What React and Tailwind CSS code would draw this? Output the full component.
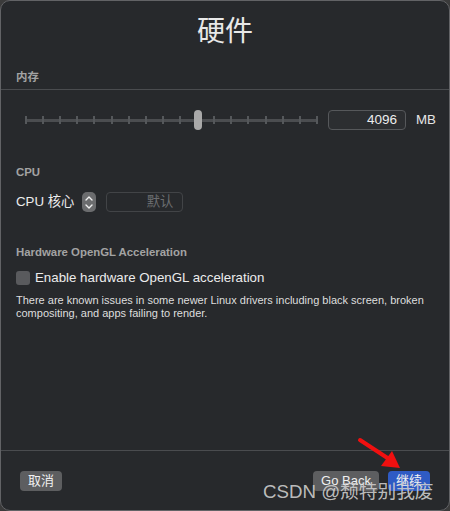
import React from 'react'

const font = { fontFamily: '"Liberation Sans", "Noto Sans CJK SC", sans-serif' }

const Slider = () => {
  const ticks = Array.from({ length: 18 })
  return (
    <div className="relative w-[293px] h-[20px] flex items-center">
      <div className="absolute left-0 right-0 top-[9px] h-[3px] bg-[#4b4d50]" />
      <div className="relative w-full flex justify-between items-center">
        {ticks.map((_, i) => (
          <div key={i} className="w-[2px] h-[8px] bg-[#55585b]" />
        ))}
      </div>
      <div className="absolute left-[169px] top-0 w-[8px] h-[20px] rounded-full bg-[#a9a9a9]" />
    </div>
  )
}

const App = () => {
  return (
    <div className="w-[450px] h-[511px] bg-[#3b3b3b] text-[#e6e6e6]" style={font}>
      <div className="relative h-full rounded-[10px] border border-[#626366] bg-[#27292c] flex flex-col overflow-hidden">
        {/* title */}
        <h1 className="pt-[13px] text-center text-[28px] leading-[36px] text-[#e8e8e8]">硬件</h1>

        {/* 内存 */}
        <div className="mt-[19px] px-[15px] text-[11.4px] leading-[16px] font-bold text-[#a3a3a3]">内存</div>
        <div className="mt-[4px] h-px bg-[#4a4c4f]" />
        <div className="mt-[20px] flex items-center pl-[24px]">
          <Slider />
          <div className="ml-[10px] w-[78px] h-[20px] rounded-[4px] border border-[#56585b] bg-[#2c2e31] flex items-center justify-end pr-[8px] text-[13.5px] text-[#ededed]">
            4096
          </div>
          <span className="ml-[10px] text-[13.3px] text-[#e6e6e6]">MB</span>
        </div>

        {/* CPU */}
        <div className="mt-[34px] px-[15px] text-[11.4px] leading-[16px] font-bold text-[#a3a3a3]">CPU</div>
        <div className="mt-[12px] flex items-center px-[15px] h-[20px]">
          <span className="text-[13.3px] text-[#ececec]">CPU 核心</span>
          <div className="ml-[8px] w-[14px] h-[20px] rounded-[5px] bg-[#6b6c6e] flex flex-col items-center justify-center gap-[3px]">
            <svg width="8" height="5" viewBox="0 0 8 5"><path d="M1 4 L4 1 L7 4" stroke="#f0f0f0" strokeWidth="1.4" fill="none" strokeLinecap="round" strokeLinejoin="round" /></svg>
            <svg width="8" height="5" viewBox="0 0 8 5"><path d="M1 1 L4 4 L7 1" stroke="#f0f0f0" strokeWidth="1.4" fill="none" strokeLinecap="round" strokeLinejoin="round" /></svg>
          </div>
          <div className="ml-[10px] w-[77px] h-[20px] rounded-[4px] border border-[#424447] flex items-center justify-end pr-[9px] text-[13.3px] text-[#6c6e71]">
            默认
          </div>
        </div>

        {/* OpenGL */}
        <div className="mt-[32px] px-[15px] text-[11.4px] leading-[16px] font-bold text-[#a3a3a3]">Hardware OpenGL Acceleration</div>
        <div className="mt-[8px] flex items-center px-[15px] h-[20px]">
          <div className="w-[14px] h-[14px] rounded-[3px] bg-[#595a5d]" />
          <span className="ml-[5px] text-[13.3px] text-[#ececec]">Enable hardware OpenGL acceleration</span>
        </div>
        <p className="mt-[6px] pl-[15px] pr-[2px] text-[11px] leading-[13px] text-[#dedede]">
          There are known issues in some newer Linux drivers including black screen, broken compositing, and apps failing to render.
        </p>

        <div className="flex-1" />
        <div className="h-px bg-[#4a4c4f]" />

        {/* buttons */}
        <div className="flex items-center mt-[20px] mb-[19px] px-[19px]">
          <button className="w-[42px] h-[20px] rounded-[4px] bg-[#5d5e60] text-[13px] text-[#f0f0f0]">取消</button>
          <div className="flex-1" />
          <button className="w-[66px] h-[20px] rounded-[4px] bg-[#5d5e60] text-[13px] text-[#f0f0f0]">Go Back</button>
          <button className="ml-[9px] w-[42px] h-[20px] rounded-[4px] bg-[#2f5bc4] text-[13px] text-[#f2f2f2]">继续</button>
        </div>

        {/* annotation arrow */}
        <svg className="absolute left-[350px] top-[434px]" width="60" height="40" viewBox="0 0 60 40">
          <path d="M9 5 L38 24" stroke="#f01010" strokeWidth="4" strokeLinecap="round" />
          <path d="M49 33 L30 31 L41 16 Z" fill="#f01010" />
        </svg>

        {/* watermark */}
        <div className="absolute left-[262px] top-[479px] text-[18.7px] leading-[24px] text-[#cfcfcf]/90 whitespace-nowrap">
          CSDN @颓特别我废
        </div>
      </div>
    </div>
  )
}

export default App
